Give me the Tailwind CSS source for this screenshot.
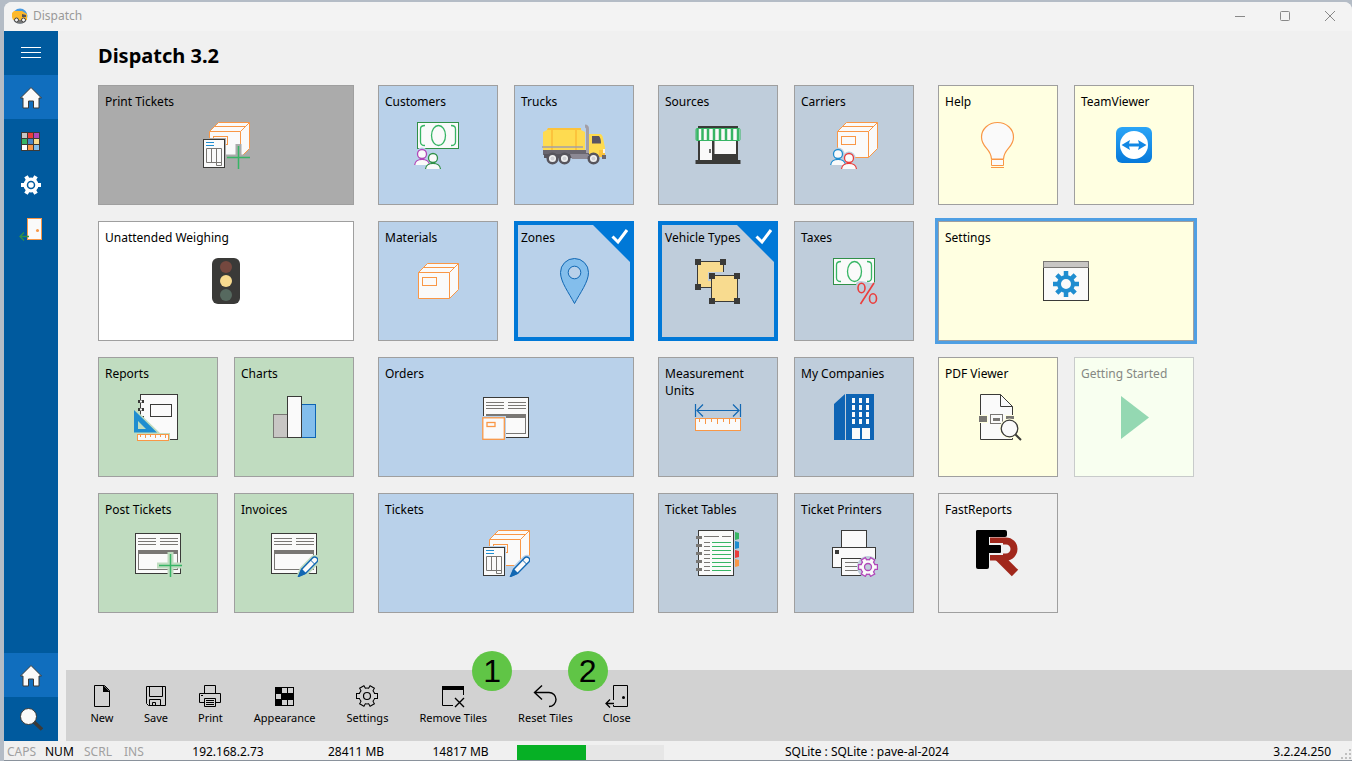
<!DOCTYPE html>
<html lang="en">
<head>
  <meta charset="UTF-8">
  <meta name="viewport" content="width=device-width, initial-scale=1.0">
  <title>Dispatch</title>
  <script src="https://cdn.jsdelivr.net/npm/@tailwindcss/browser@4"></script>
</head>
<body class="h-screen overflow-hidden bg-[#b4bcc6] pl-1 pt-0.5 font-['Noto_Sans','Open_Sans',sans-serif] text-black">

  <!-- Shared icon parts. currentColor is the colour of the tile, used for the gap around overlays -->
  <svg class="hidden">
    <symbol id="box" viewBox="0 0 48 48">
      <g fill="#fafafa" stroke="#f99746">
        <path d="M4.500 15.500L13.500 6.500H44.500V32.500L35.500 41.500H4.500Z"/>
        <path d="M4.500 15.500H35.500V41.500M35.500 15.500L44.500 6.500M9 10.500H40.500" fill="none"/>
        <rect x="8.500" y="20.500" width="14" height="8"/>
      </g>
    </symbol>
    <symbol id="sheet" viewBox="0 0 48 48">
      <rect x="0" y="17" width="24" height="31" fill="currentColor"/>
      <rect x="1.500" y="18.500" width="21" height="28" fill="#fafafa" stroke="#3a3a38"/>
      <path d="M4 21.500H12M4 24.500H12" stroke="#1f8dd0"/>
      <path d="M4.500 27.500H19.500V44.500H14.500V27.500M4.500 27.500V41.500H19.500M9.500 27.500V41.500" fill="none" stroke="#797774"/>
    </symbol>
    <symbol id="plus" viewBox="0 0 48 48">
      <path d="M36.500 23V48M23 36.500H48" stroke="currentColor" stroke-width="6"/>
      <path d="M36.500 25V48M25 36.500H48" stroke="#37b565" stroke-width="1.500"/>
    </symbol>
    <symbol id="pencil" viewBox="0 0 48 48">
      <path d="M27 48L31 39L42 28A4 4 0 0 1 48 34L37 45Z" fill="currentColor" stroke="currentColor" stroke-width="2"/>
      <path d="M28.500 47.500L31.500 40.500L42.500 29A2.700 2.700 0 0 1 46.800 33L35.500 44.500Z" fill="#fafafa" stroke="#1268b3" stroke-width="1.400"/>
      <path d="M40.500 31L44.500 35" stroke="#1268b3"/>
      <path d="M28 48L31.500 39.500L36.500 44.500Z" fill="#1268b3"/>
    </symbol>
    <symbol id="money" viewBox="0 0 48 48">
      <rect x="3.500" y="1.500" width="41" height="26" fill="#fafafa" stroke="#309048"/>
      <path d="M11 4.500C8 4.500 6.500 5.500 6.500 8V21C6.500 23.500 8 24.500 11 24.500M37 4.500C40 4.500 41.500 5.500 41.500 8V21C41.500 23.500 40 24.500 37 24.500" fill="none" stroke="#37b565" stroke-width="1.300"/>
      <ellipse cx="24.500" cy="14.500" rx="7" ry="10" fill="none" stroke="#37b565" stroke-width="1.300"/>
    </symbol>
    <symbol id="form" viewBox="0 0 48 48">
      <rect x="1.500" y="4.500" width="45" height="40" fill="#fafafa" stroke="#3a3a38"/>
      <path d="M4 9.500H22M4 12.500H22M4 15.500H22M26 9.500H44M26 12.500H44M26 15.500H44" stroke="#797774"/>
      <rect x="4.500" y="21.500" width="39" height="19" fill="#fafafa" stroke="#797774"/>
      <rect x="4" y="21" width="40" height="4" fill="#797774"/>
    </symbol>
    <symbol id="house" viewBox="0 0 24 24">
      <path d="M12 2.500L1.500 13H4V23H9.500V16H14.500V23H20V13H22.500Z" fill="#fafafa" stroke="#3a3a38"/>
    </symbol>
    <symbol id="tick" viewBox="0 0 37 37">
      <path d="M0 0H37V37Z" fill="#0078d7"/>
      <path d="M19.500 11.500L25 17L34 5" fill="none" stroke="#fff" stroke-width="3"/>
    </symbol>
  </svg>

  <div class="flex h-full flex-col overflow-hidden rounded-t-lg bg-[#f0f0f0]">

    <!-- Title bar -->
    <header class="flex h-[29px] shrink-0 items-center bg-[#f3f3f3] pb-0.5 pl-2">
      <svg class="size-4" viewBox="0 0 16 16">
        <circle cx="8" cy="8" r="7.500" fill="#4a9ae0"/>
        <path d="M1 11H15A7.500 7.500 0 0 1 1 11Z" fill="#777"/>
        <path d="M0 5L2 3H10L15 6V12H1L0 9Z" fill="#fdb92c"/>
        <path d="M10 6L14 7V9H10Z" fill="#555"/>
        <circle cx="4.500" cy="12" r="2" fill="#f4f4f4" stroke="#444"/>
        <circle cx="11.500" cy="12" r="2" fill="#f4f4f4" stroke="#444"/>
      </svg>
      <span class="ml-[5px] grow text-[12px] text-[#999]">Dispatch</span>
      <button aria-label="Minimize" class="grid h-full w-[45px] place-items-center"><svg class="size-3" viewBox="0 0 12 12"><path d="M1 6.500H11" stroke="#888"/></svg></button>
      <button aria-label="Maximize" class="grid h-full w-[45px] place-items-center"><svg class="size-3" viewBox="0 0 12 12"><rect x="1.500" y="1.500" width="9" height="9" rx="1" fill="none" stroke="#888"/></svg></button>
      <button aria-label="Close window" class="grid h-full w-[45px] place-items-center"><svg class="size-3" viewBox="0 0 12 12"><path d="M1 1L11 11M11 1L1 11" stroke="#888"/></svg></button>
    </header>

    <div class="flex min-h-0 grow">
      <!-- Sidebar -->
      <nav class="flex w-[54px] shrink-0 flex-col bg-[#005a9e]">
        <button aria-label="Menu" class="grid h-11 place-items-center">
          <svg class="size-6" viewBox="0 0 24 24"><path d="M2 6.500H22M2 11.500H22M2 16.500H22" stroke="#fff"/></svg>
        </button>
        <button aria-label="Home" class="grid h-11 place-items-center bg-[#106ebe]"><svg class="size-6"><use href="#house"/></svg></button>
        <button aria-label="Tiles" class="grid h-11 place-items-center">
          <svg class="size-6" viewBox="0 0 24 24">
            <rect x="2" y="3" width="19" height="19" fill="#3a3a38"/>
            <path d="M3 4h5v5H3z" fill="#c8c6c4"/><path d="M9 4h5v5H9z" fill="#eb3d3b"/><path d="M15 4h5v5h-5z" fill="#b146b9"/>
            <path d="M3 10h5v5H3z" fill="#37b565"/><path d="M9 10h5v5H9z" fill="#4a86c8"/><path d="M15 10h5v5h-5z" fill="#f8db8f"/>
            <path d="M3 16h5v5H3z" fill="#fff"/><path d="M9 16h5v5H9z" fill="#f99746"/><path d="M15 16h5v5h-5z" fill="#83beec"/>
          </svg>
        </button>
        <button aria-label="Options" class="grid h-11 place-items-center">
          <svg class="size-6" viewBox="0 0 24 24" stroke="#fff" fill="none">
            <path d="M2 12H22M7 3.300L17 20.700M17 3.300L7 20.700" stroke-width="4"/>
            <circle cx="12" cy="12" r="5.500" stroke-width="4" fill="#fff"/>
            <circle cx="12" cy="12" r="3.500" stroke="#005a9e" stroke-width="1.500"/>
          </svg>
        </button>
        <button aria-label="Exit" class="grid h-11 place-items-center">
          <svg class="size-6" viewBox="0 0 24 24" fill="none">
            <rect x="8.500" y="1.500" width="14" height="21" fill="#fafafa" stroke="#f99746"/>
            <circle cx="18.500" cy="13.500" r="1.500" fill="#f99746"/>
            <path d="M10 19.500H1M5 15.500L1 19.500L5 23.500" stroke="#309048" stroke-width="1.300"/>
          </svg>
        </button>
        <button aria-label="Start" class="mt-auto grid h-11 place-items-center bg-[#106ebe]"><svg class="size-6"><use href="#house"/></svg></button>
        <button aria-label="Search" class="grid h-11 place-items-center">
          <svg class="size-6" viewBox="0 0 24 24">
            <path d="M14.500 14.500L23 22.500" stroke="#3a3a38" stroke-width="3.500"/>
            <circle cx="9.500" cy="9.500" r="8" fill="#fafafa" stroke="#3a3a38"/>
          </svg>
        </button>
      </nav>

      <div class="flex min-w-0 grow flex-col">
        <main class="min-h-0 grow overflow-hidden pl-10 pt-[11px]">
          <h1 class="text-[20px] leading-7 font-bold">Dispatch 3.2</h1>

          <!-- Tile groups -->
          <div class="mt-[15px] flex flex-wrap gap-x-6 gap-y-4 text-left text-[12px] leading-[17px]">

            <section class="grid w-64 auto-rows-[120px] grid-cols-2 gap-4">
              <button class="col-span-2 grid border border-[#9f9f9f] bg-[#ababab] text-left">
                <span class="col-start-1 row-start-1 self-start px-1.5 pt-[7px]">Print Tickets</span>
                <svg class="col-start-1 row-start-1 size-12 place-self-center text-[#ababab]" viewBox="0 0 48 48">
                  <use href="#box" x="3" y="-5" width="48" height="48"/><use href="#sheet"/><use href="#plus"/>
                </svg>
              </button>
              <button class="col-span-2 grid border border-[#9f9f9f] bg-white text-left">
                <span class="col-start-1 row-start-1 self-start px-1.5 pt-[7px]">Unattended Weighing</span>
                <svg class="col-start-1 row-start-1 size-12 place-self-center" viewBox="0 0 48 48">
                  <rect x="10" y="1" width="28" height="46" rx="6" fill="#3a3a38"/>
                  <circle cx="24" cy="10" r="6" fill="#75483f"/><circle cx="24" cy="24" r="6" fill="#f8db8f"/><circle cx="24" cy="38" r="6" fill="#56695f"/>
                </svg>
              </button>
              <button class="grid border border-[#9f9f9f] bg-[#c0dcc0] text-left">
                <span class="col-start-1 row-start-1 self-start px-1.5 pt-[7px]">Reports</span>
                <svg class="col-start-1 row-start-1 size-12 place-self-center text-[#c0dcc0]" viewBox="0 0 48 48">
                  <rect x="6.500" y="1.500" width="37" height="45" fill="#fafafa" stroke="#3a3a38"/>
                  <rect x="16.500" y="11.500" width="21" height="12" fill="#fafafa" stroke="#3a3a38"/>
                  <path d="M4 8.500H10M4 16.500H10M4 24.500H10" stroke="#3a3a38" stroke-width="3"/>
                  <path d="M6 8.500H8M6 16.500H8" stroke="#fafafa" stroke-width="2"/>
                  <path d="M0 15L26 40H36V48H0Z" fill="currentColor"/>
                  <path d="M0 17V39.500H23ZM4 28V36H12Z" fill="#1f8dd0" fill-rule="evenodd"/>
                  <rect x="3.500" y="41.500" width="31" height="6" fill="#fafafa" stroke="#f99746"/>
                  <path d="M6.500 42V44M11.500 42V45M16.500 42V44M21.500 42V45M26.500 42V44M31.500 42V45" stroke="#f99746"/>
                </svg>
              </button>
              <button class="grid border border-[#9f9f9f] bg-[#c0dcc0] text-left">
                <span class="col-start-1 row-start-1 self-start px-1.5 pt-[7px]">Charts</span>
                <svg class="col-start-1 row-start-1 size-12 place-self-center" viewBox="0 0 48 48">
                  <rect x="3.500" y="21.500" width="14" height="23" fill="#c8c6c4" stroke="#797774"/>
                  <rect x="31.500" y="11.500" width="14" height="33" fill="#83beec" stroke="#0e64b4"/>
                  <rect x="17.500" y="3.500" width="14" height="41" fill="#fafafa" stroke="#3a3a38"/>
                </svg>
              </button>
              <button class="grid border border-[#9f9f9f] bg-[#c0dcc0] text-left">
                <span class="col-start-1 row-start-1 self-start px-1.5 pt-[7px]">Post Tickets</span>
                <svg class="col-start-1 row-start-1 size-12 place-self-center text-[#c0dcc0]" viewBox="0 0 48 48"><use href="#form"/><use href="#plus"/></svg>
              </button>
              <button class="grid border border-[#9f9f9f] bg-[#c0dcc0] text-left">
                <span class="col-start-1 row-start-1 self-start px-1.5 pt-[7px]">Invoices</span>
                <svg class="col-start-1 row-start-1 size-12 place-self-center text-[#c0dcc0]" viewBox="0 0 48 48"><use href="#form"/><use href="#pencil"/></svg>
              </button>
            </section>

            <section class="grid w-64 auto-rows-[120px] grid-cols-2 gap-4">
              <button class="grid border border-[#9f9f9f] bg-[#b9d1ea] text-left">
                <span class="col-start-1 row-start-1 self-start px-1.5 pt-[7px]">Customers</span>
                <svg class="col-start-1 row-start-1 size-12 place-self-center text-[#b9d1ea]" viewBox="0 0 48 48">
                  <use href="#money"/>
                  <circle cx="8" cy="33" r="6.500" fill="currentColor"/>
                  <circle cx="19" cy="37" r="6.500" fill="currentColor"/>
                  <g fill="#fafafa" stroke="#b146b9" stroke-width="1.300"><path d="M.7 44C1 36.500 15 36.500 15.500 44"/><circle cx="8" cy="33" r="4.500"/></g>
                  <g fill="#fafafa" stroke="#309048" stroke-width="1.300"><path d="M11.500 48C12 40.500 26 40.500 26.500 48"/><circle cx="19" cy="37" r="4.500"/></g>
                </svg>
              </button>
              <button class="grid border border-[#9f9f9f] bg-[#b9d1ea] text-left">
                <span class="col-start-1 row-start-1 self-start px-1.5 pt-[7px]">Trucks</span>
                <svg class="col-start-1 row-start-1 h-12 w-16 place-self-center" viewBox="0 0 64 48">
                  <path d="M6 7H39V9L43 11V29H1V11L5 9Z" fill="#fedb50"/>
                  <path d="M6 7H39V9H5ZM9 9H11V29H9ZM33 9H35V29H33Z" fill="#fcc33c"/>
                  <path d="M1 29H62V34H1Z" fill="#69666f"/>
                  <path d="M2 33H30V37H2Z" fill="#57555d"/><path d="M28 33H46V38H30Z" fill="#8c8994"/>
                  <path d="M47 13H58Q60 13 61 17L63 27V36H47Z" fill="#fedb50"/><path d="M57 29H63V36H57Z" fill="#fcc33c"/>
                  <path d="M50 15H57Q59 17 59 22.500H50Z" fill="#5a5563"/>
                  <path d="M60 34H64V38H60Z" fill="#69666f"/><path d="M61 28H63V32H61Z" fill="#fff4e0"/>
                  <path d="M0 26H41" stroke="#a29fa8" stroke-width="1.500"/>
                  <path d="M43 5Q45.500 5 45.500 8V32" fill="none" stroke="#a29fa8" stroke-width="3"/>
                  <g fill="#f0f0f0" stroke="#57555d" stroke-width="2.500"><circle cx="10.500" cy="37.500" r="4.800"/><circle cx="22.500" cy="37.500" r="4.800"/><circle cx="51.500" cy="37.500" r="4.800"/></g>
                  <g fill="#d0d0d4"><circle cx="10.500" cy="37.500" r="2"/><circle cx="22.500" cy="37.500" r="2"/><circle cx="51.500" cy="37.500" r="2"/></g>
                </svg>
              </button>
              <button class="grid border border-[#9f9f9f] bg-[#b9d1ea] text-left">
                <span class="col-start-1 row-start-1 self-start px-1.5 pt-[7px]">Materials</span>
                <svg class="col-start-1 row-start-1 size-12 place-self-center"><use href="#box"/></svg>
              </button>
              <button aria-pressed="true" class="relative grid border-4 border-[#0078d7] bg-[#b9d1ea] text-left">
                <span class="col-start-1 row-start-1 self-start px-[3px] pt-1">Zones</span>
                <svg class="col-start-1 row-start-1 size-12 place-self-center" viewBox="0 0 48 48">
                  <path d="M24.500 46.500C19 36 10.500 25 10.500 15.500A14 14 0 0 1 38.500 15.500C38.500 25 30 36 24.500 46.500Z" fill="#83beec" stroke="#1268b3"/>
                  <circle cx="24.500" cy="15.500" r="6.300" fill="#b9d1ea" stroke="#1268b3"/>
                </svg>
                <svg class="absolute top-0 right-0 size-[37px]"><use href="#tick"/></svg>
              </button>
              <button class="col-span-2 grid border border-[#9f9f9f] bg-[#b9d1ea] text-left">
                <span class="col-start-1 row-start-1 self-start px-1.5 pt-[7px]">Orders</span>
                <svg class="col-start-1 row-start-1 size-12 place-self-center" viewBox="0 0 48 48">
                  <use href="#form"/>
                  <path d="M0 23H24V48H0Z" fill="#b9d1ea"/>
                  <rect x=".8" y="24.800" width="21.500" height="21.500" fill="#fafafa" stroke="#f99746" stroke-width="1.300"/>
                  <rect x="5" y="29.500" width="8" height="4" fill="#fafafa" stroke="#f99746" stroke-width="1.300"/>
                </svg>
              </button>
              <button class="col-span-2 grid border border-[#9f9f9f] bg-[#b9d1ea] text-left">
                <span class="col-start-1 row-start-1 self-start px-1.5 pt-[7px]">Tickets</span>
                <svg class="col-start-1 row-start-1 size-12 place-self-center text-[#b9d1ea]" viewBox="0 0 48 48">
                  <use href="#box" x="3" y="-5" width="48" height="48"/><use href="#sheet"/><use href="#pencil"/>
                </svg>
              </button>
            </section>

            <section class="grid w-64 auto-rows-[120px] grid-cols-2 gap-4">
              <button class="grid border border-[#9f9f9f] bg-[#bfcddb] text-left">
                <span class="col-start-1 row-start-1 self-start px-1.5 pt-[7px]">Sources</span>
                <svg class="col-start-1 row-start-1 size-12 place-self-center" viewBox="0 0 48 48">
                  <path d="M4 5H44V39H46.500V43H1.500V39H4Z" fill="#3a3a38"/>
                  <path d="M6 19H18V39H6ZM20.500 19H42V33H20.500Z" fill="#fafafa"/>
                  <path d="M16 28V32" stroke="#3a3a38" stroke-width="1.500"/>
                  <rect x="2" y="7.500" width="44" height="12" rx="1" fill="#fafafa" stroke="#37b565"/>
                  <path d="M3.500 8V19M8.500 8V19M14 8V19M20 8V19M26 8V19M32 8V19M38 8V19M44 8V19" stroke="#37b565" stroke-width="2.500"/>
                </svg>
              </button>
              <button class="grid border border-[#9f9f9f] bg-[#bfcddb] text-left">
                <span class="col-start-1 row-start-1 self-start px-1.5 pt-[7px]">Carriers</span>
                <svg class="col-start-1 row-start-1 size-12 place-self-center text-[#bfcddb]" viewBox="0 0 48 48">
                  <use href="#box" x="3" y="-5" width="48" height="48"/>
                  <circle cx="8" cy="33" r="6.500" fill="currentColor"/>
                  <circle cx="19" cy="37" r="6.500" fill="currentColor"/>
                  <g fill="#fafafa" stroke="#1f8dd0" stroke-width="1.300"><path d="M.7 44C1 36.500 15 36.500 15.500 44"/><circle cx="8" cy="33" r="4.500"/></g>
                  <g fill="#fafafa" stroke="#eb3d3b" stroke-width="1.300"><path d="M11.500 48C12 40.500 26 40.500 26.500 48"/><circle cx="19" cy="37" r="4.500"/></g>
                </svg>
              </button>
              <button aria-pressed="true" class="relative grid border-4 border-[#0078d7] bg-[#bfcddb] text-left">
                <span class="col-start-1 row-start-1 self-start px-[3px] pt-1">Vehicle Types</span>
                <svg class="col-start-1 row-start-1 size-12 place-self-center" viewBox="0 0 48 48">
                  <rect x="3.500" y="4.500" width="26" height="26" fill="#f8db8f" stroke="#3a3a38"/>
                  <path d="M1 2h6v6H1zM26 2h6v6h-6zM1 27h6v6H1z" fill="#3a3a38"/>
                  <path d="M14 15H30V18H44V44H17V24H14Z" fill="#bfcddb"/>
                  <rect x="17.500" y="18.500" width="26" height="26" fill="#f8db8f" stroke="#3a3a38"/>
                  <path d="M15 16h6v6h-6zM40 16h6v6h-6zM15 41h6v6h-6zM40 41h6v6h-6z" fill="#3a3a38"/>
                </svg>
                <svg class="absolute top-0 right-0 size-[37px]"><use href="#tick"/></svg>
              </button>
              <button class="grid border border-[#9f9f9f] bg-[#bfcddb] text-left">
                <span class="col-start-1 row-start-1 self-start px-1.5 pt-[7px]">Taxes</span>
                <svg class="col-start-1 row-start-1 size-12 place-self-center" viewBox="0 0 48 48">
                  <use href="#money"/>
                  <path d="M26 26Q29 23 34 24.500L41 26L47 25V48H29Z" fill="#bfcddb"/>
                  <g fill="none" stroke="#eb3d3b" stroke-width="1.600"><ellipse cx="31.500" cy="31" rx="3.500" ry="4.800"/><ellipse cx="43" cy="41.500" rx="3.500" ry="4.800"/><path d="M44 26L30.500 47"/></g>
                </svg>
              </button>
              <button class="grid border border-[#9f9f9f] bg-[#bfcddb] text-left">
                <span class="col-start-1 row-start-1 self-start px-1.5 pt-[7px]">Measurement Units</span>
                <svg class="col-start-1 row-start-1 size-12 place-self-center" viewBox="0 0 48 48" fill="none">
                  <path d="M1.500 11V24M46.500 11V24M3 17.500H45M9 11.500L3 17.500L9 23.500M39 11.500L45 17.500L39 23.500" stroke="#1268b3" stroke-width="1.200"/>
                  <rect x="1.500" y="25.500" width="45" height="12" fill="#fafafa" stroke="#f99746"/>
                  <path d="M5.500 26V29M11.500 26V31M17.500 26V29M23.500 26V31M29.500 26V29M35.500 26V31M41.500 26V29" stroke="#f99746"/>
                </svg>
              </button>
              <button class="grid border border-[#9f9f9f] bg-[#bfcddb] text-left">
                <span class="col-start-1 row-start-1 self-start px-1.5 pt-[7px]">My Companies</span>
                <svg class="col-start-1 row-start-1 size-12 place-self-center" viewBox="0 0 48 48">
                  <path d="M4 11L15 1V47H4ZM16 1H44V47H16Z" fill="#0e64b4"/>
                  <path d="M22 5h3v5h-3zM29 5h3v5h-3zM36 5h3v5h-3zM22 12h3v5h-3zM29 12h3v5h-3zM36 12h3v5h-3zM22 19h3v5h-3zM29 19h3v5h-3zM36 19h3v5h-3zM22 26h3v5h-3zM29 26h3v5h-3zM36 26h3v5h-3zM22 35h8v11h-8zM32 35h8v11h-8z" fill="#fafafa"/>
                </svg>
              </button>
              <button class="grid border border-[#9f9f9f] bg-[#bfcddb] text-left">
                <span class="col-start-1 row-start-1 self-start px-1.5 pt-[7px]">Ticket Tables</span>
                <svg class="col-start-1 row-start-1 size-12 place-self-center" viewBox="0 0 48 48">
                  <rect x="4.500" y="1.500" width="35" height="45" fill="#fafafa" stroke="#3a3a38"/>
                  <path d="M2 8.500H8M2 16.500H8M2 24.500H8M2 32.500H8M2 40.500H8" stroke="#797774" stroke-width="3"/>
                  <path d="M10 7.500H25M28 7.500H37M10 13.500H16M10 17.500H16M10 21.500H16M10 25.500H16M10 29.500H16M10 33.500H16M10 37.500H16M10 41.500H16" stroke="#797774"/>
                  <path d="M18 13.500H37M18 17.500H37M18 21.500H37M18 25.500H37M18 29.500H37M18 33.500H37M18 37.500H37M18 41.500H37" stroke="#37b565"/>
                  <path d="M41 3L45 4V10L41 11Z" fill="#37b565"/><path d="M41 12L45 13V19L41 20Z" fill="#1f8dd0"/><path d="M41 21L45 22V28L41 29Z" fill="#eb3d3b"/><path d="M41 30L45 31V37L41 38Z" fill="#f99746"/>
                </svg>
              </button>
              <button class="grid border border-[#9f9f9f] bg-[#bfcddb] text-left">
                <span class="col-start-1 row-start-1 self-start px-1.5 pt-[7px]">Ticket Printers</span>
                <svg class="col-start-1 row-start-1 size-12 place-self-center" viewBox="0 0 48 48">
                  <g fill="#fafafa" stroke="#3a3a38"><rect x="11.500" y="1.500" width="25" height="17"/><rect x="2.500" y="18.500" width="43" height="20"/><rect x="11.500" y="29.500" width="25" height="17"/></g>
                  <path d="M5 21h4v4H5z" fill="#3a3a38"/>
                  <path d="M15 33.500H30M15 37.500H30M15 41.500H30" stroke="#797774"/>
                  <circle cx="38" cy="38" r="11" fill="#bfcddb"/>
                  <g stroke="#b146b9" stroke-width="6"><path d="M28 38H48M33 29.300L43 46.700M43 29.300L33 46.700"/><circle cx="38" cy="38" r="5"/></g>
                  <g stroke="#fafafa" stroke-width="3.500"><path d="M29.200 38H46.800M33.600 30.400L42.400 45.600M42.400 30.400L33.600 45.600"/><circle cx="38" cy="38" r="5" fill="#fafafa"/></g>
                  <circle cx="38" cy="38" r="3.500" fill="#bfcddb" stroke="#b146b9" stroke-width="1.300"/>
                </svg>
              </button>
            </section>

            <section class="grid w-64 auto-rows-[120px] grid-cols-2 gap-4">
              <button class="grid border border-[#9f9f9f] bg-[#ffffe1] text-left">
                <span class="col-start-1 row-start-1 self-start px-1.5 pt-[7px]">Help</span>
                <svg class="col-start-1 row-start-1 size-12 place-self-center" viewBox="0 0 48 48" fill="#fafafa" stroke="#f99746">
                  <path d="M17.500 38C17 27 7.500 27 7.500 16A16 14.500 0 0 1 39.500 16C39.500 27 30 27 29.500 38Z" stroke-width="1.200"/>
                  <path d="M17.500 38.500H29.500V44.500H17.500ZM17 46.500H30"/>
                </svg>
              </button>
              <button class="grid border border-[#9f9f9f] bg-[#ffffe1] text-left">
                <span class="col-start-1 row-start-1 self-start px-1.5 pt-[7px]">TeamViewer</span>
                <svg class="col-start-1 row-start-1 size-12 place-self-center" viewBox="0 0 48 48">
                  <linearGradient id="blue" x2="0" y2="1"><stop stop-color="#2ba5f7"/><stop offset="1" stop-color="#0679da"/></linearGradient>
                  <rect x="6" y="6" width="36" height="36" rx="6" fill="url(#blue)"/>
                  <circle cx="24" cy="24" r="14" fill="#fff"/>
                  <path d="M11.500 24L20 19L19 22.500H29L28 19L36.500 24L28 29L29 25.500H19L20 29Z" fill="#1187e4"/>
                </svg>
              </button>
              <button class="col-span-2 grid border border-[#9f9f9f] bg-[#ffffe1] text-left outline-3 outline-[#4f9fe3]">
                <span class="col-start-1 row-start-1 self-start px-1.5 pt-[7px]">Settings</span>
                <svg class="col-start-1 row-start-1 size-12 place-self-center" viewBox="0 0 48 48">
                  <rect x="1.500" y="4.500" width="45" height="39" fill="#fafafa" stroke="#3a3a38"/>
                  <rect x="1.500" y="4.500" width="45" height="6" fill="#c8c6c4" stroke="#797774"/>
                  <path d="M11 27H37M24 14V40M14.800 17.800L33.200 36.200M33.200 17.800L14.800 36.200" stroke="#1f8dd0" stroke-width="4.500"/>
                  <circle cx="24" cy="27" r="7" fill="#fafafa" stroke="#1f8dd0" stroke-width="4"/>
                </svg>
              </button>
              <button class="grid border border-[#9f9f9f] bg-[#ffffe1] text-left">
                <span class="col-start-1 row-start-1 self-start px-1.5 pt-[7px]">PDF Viewer</span>
                <svg class="col-start-1 row-start-1 size-12 place-self-center" viewBox="0 0 48 48">
                  <path d="M6.500 1.500H26.500L38.500 13.500V46.500H6.500Z" fill="#fafafa" stroke="#3a3a38"/>
                  <path d="M26.500 1.500V13.500H38.500" fill="none" stroke="#3a3a38"/>
                  <path d="M5 22H14V30H5ZM31 22H41V30H31Z" fill="#ffffe1"/>
                  <path d="M5 23h8v6H5zM19 25h7v3h-7zM32 23h8v3h-8z" fill="#797774"/>
                  <rect x="16.500" y="21.500" width="12" height="9" fill="none" stroke="#797774"/>
                  <circle cx="35.500" cy="35.500" r="10" fill="#ffffe1"/>
                  <path d="M41.500 41.500L47 47" stroke="#3a3a38" stroke-width="2"/>
                  <circle cx="35.500" cy="35.500" r="8.300" fill="#fafafa" stroke="#3a3a38" stroke-width="1.300"/>
                </svg>
              </button>
              <button disabled class="grid border border-[#c8cbcb] bg-[#f8fff0] text-left text-[#858883]">
                <span class="col-start-1 row-start-1 self-start px-1.5 pt-[7px]">Getting Started</span>
                <svg class="col-start-1 row-start-1 size-12 place-self-center" viewBox="0 0 48 48"><path d="M11 3L39 24.500L11 46Z" fill="#94d8b2"/></svg>
              </button>
              <button class="grid border border-[#9f9f9f] bg-[#f0f0f0] text-left">
                <span class="col-start-1 row-start-1 self-start px-1.5 pt-[7px]">FastReports</span>
                <!-- Product logo: black bars over a red ribbon -->
                <svg class="col-start-1 row-start-1 size-12 place-self-center" viewBox="0 0 48 48" aria-hidden="true">
                  <g fill="none" stroke="#a1271b" stroke-width="7">
                    <path d="M16 12H32A8 8 0 0 1 32 28H16"/>
                    <path d="M24 27L41 44" stroke-width="9"/>
                  </g>
                  <path d="M15 14H29V26H15Z" fill="#f0f0f0"/>
                  <rect x="2" y="1" width="13" height="39" rx="2"/>
                  <rect x="2" y="1" width="31" height="7" rx="2"/>
                  <rect x="12" y="16" width="15" height="8" rx="1"/>
                </svg>
              </button>
            </section>
          </div>
        </main>

        <!-- Toolbar -->
        <div class="ml-2 flex h-[71px] shrink-0 items-start gap-[30px] bg-[#d2d2d2] pt-3.5 pl-6 text-[11px] leading-4 whitespace-nowrap">
          <button class="flex flex-col items-center gap-0.5">
            <svg class="size-6" viewBox="0 0 24 24"><path d="M4.500 1.500H14.500L19.500 6.500V22.500H4.500Z" fill="none" stroke="#000"/><path d="M13 1L20 8H13Z"/></svg>
            New
          </button>
          <button class="flex flex-col items-center gap-0.5">
            <svg class="size-6" viewBox="0 0 24 24" fill="none" stroke="#000"><path d="M2.500 2.500H21.500V21.500H4.500L2.500 19.500ZM5.500 2.500V12.500H18.500V2.500M5.500 21.500V15.500H16.500V21.500M8.500 21.500V18.500H11.500V21.500"/></svg>
            Save
          </button>
          <button class="flex flex-col items-center gap-0.5">
            <svg class="size-6" viewBox="0 0 24 24" fill="none" stroke="#000"><path d="M6.500 9.500V1.500H17.500V9.500M6.500 18.500H1.500V9.500H22.500V18.500H17.500M6.500 14.500H17.500V22.500H6.500ZM8 16.500H16M8 18.500H16M8 20.500H16M3 11.500H5"/></svg>
            Print
          </button>
          <button class="flex flex-col items-center gap-0.5 px-px">
            <svg class="size-6" viewBox="0 0 24 24"><path d="M2 3H21V22H2Z"/><path d="M9 4h5v5H9zM15 4h5v5h-5zM3 10h5v5H3zM9 16h5v5H9zM15 16h5v5h-5z" fill="#d2d2d2"/></svg>
            Appearance
          </button>
          <button class="flex flex-col items-center gap-0.5">
            <svg class="size-6" viewBox="0 0 24 24">
              <g stroke="#000" stroke-width="6"><path d="M1 12H23M6.500 2.500L17.500 21.500M17.500 2.500L6.500 21.500"/><circle cx="12" cy="12" r="5.500"/></g>
              <g stroke="#d2d2d2" stroke-width="4"><path d="M2 12H22M7 3.400L17 20.600M17 3.400L7 20.600"/><circle cx="12" cy="12" r="5.500" fill="#d2d2d2"/></g>
              <circle cx="12" cy="12" r="3.500" fill="none" stroke="#000" stroke-width="1.200"/>
            </svg>
            Settings
          </button>
          <button class="relative flex flex-col items-center gap-0.5 px-px">
            <svg class="size-6" viewBox="0 0 24 24" fill="none" stroke="#000"><path d="M22.500 11V2.500H1.500V21.500H12"/><path d="M1 4H23" stroke-width="4"/><path d="M14 14L23 23M23 14L14 23" stroke-width="1.400"/></svg>
            Remove Tiles
            <span class="absolute -top-[33px] -right-6 grid size-10 place-items-center rounded-full bg-[#60c546] font-['Liberation_Sans',sans-serif] text-[32px] leading-10">1</span>
          </button>
          <button class="relative flex flex-col items-center gap-0.5">
            <svg class="size-6" viewBox="0 0 24 24" fill="none" stroke="#000" stroke-width="1.400"><path d="M9 1.500L1.500 8.500L9 15.500M1.500 8.500H16A7 7 0 0 1 16 22.500"/></svg>
            Reset Tiles
            <span class="absolute -top-[33px] -right-[35px] z-10 grid size-10 place-items-center rounded-full bg-[#60c546] font-['Liberation_Sans',sans-serif] text-[32px] leading-10">2</span>
          </button>
          <button class="flex flex-col items-center gap-0.5">
            <svg class="size-6" viewBox="0 0 24 24" fill="none" stroke="#000"><path d="M8.500 16V1.500H22.500V22.500H8.500V21"/><path d="M9 19.500H1M5 15.500L1 19.500L5 23.500" stroke-width="1.300"/><circle cx="18.500" cy="13.500" r="1.500" fill="#000" stroke="none"/></svg>
            Close
          </button>
        </div>
      </div>
    </div>

    <!-- Status bar -->
    <footer class="flex h-5 shrink-0 items-end border-b border-[#8a929c] pl-[3px] text-[12px] leading-[17px] whitespace-nowrap">
      <span class="w-[38px] text-[#a0a0a0]">CAPS</span>
      <span class="w-[39px]">NUM</span>
      <span class="w-10 text-[#a0a0a0]">SCRL</span>
      <span class="w-10 text-[#a0a0a0]">INS</span>
      <span class="w-32 text-center">192.168.2.73</span>
      <span class="w-32 text-center">28411 MB</span>
      <span class="w-[81px] text-center">14817 MB</span>
      <div role="progressbar" aria-label="Memory" aria-valuenow="47" class="ml-4 h-[15px] w-[147px] bg-[#e6e6e6]">
        <div class="h-full bg-[#06b025]" style="width: 47%"></div>
      </div>
      <span class="grow pl-[121px]">SQLite : SQLite : pave-al-2024</span>
      <span class="pr-[9px]">3.2.24.250</span>
      <svg class="size-3" viewBox="0 0 12 12"><path d="M9 9h2v2H9zM9 5h2v2H9zM5 9h2v2H5zM9 1h2v2H9zM5 5h2v2H5zM1 9h2v2H1z" fill="#bfbfbf"/></svg>
    </footer>
  </div>
</body>
</html>
